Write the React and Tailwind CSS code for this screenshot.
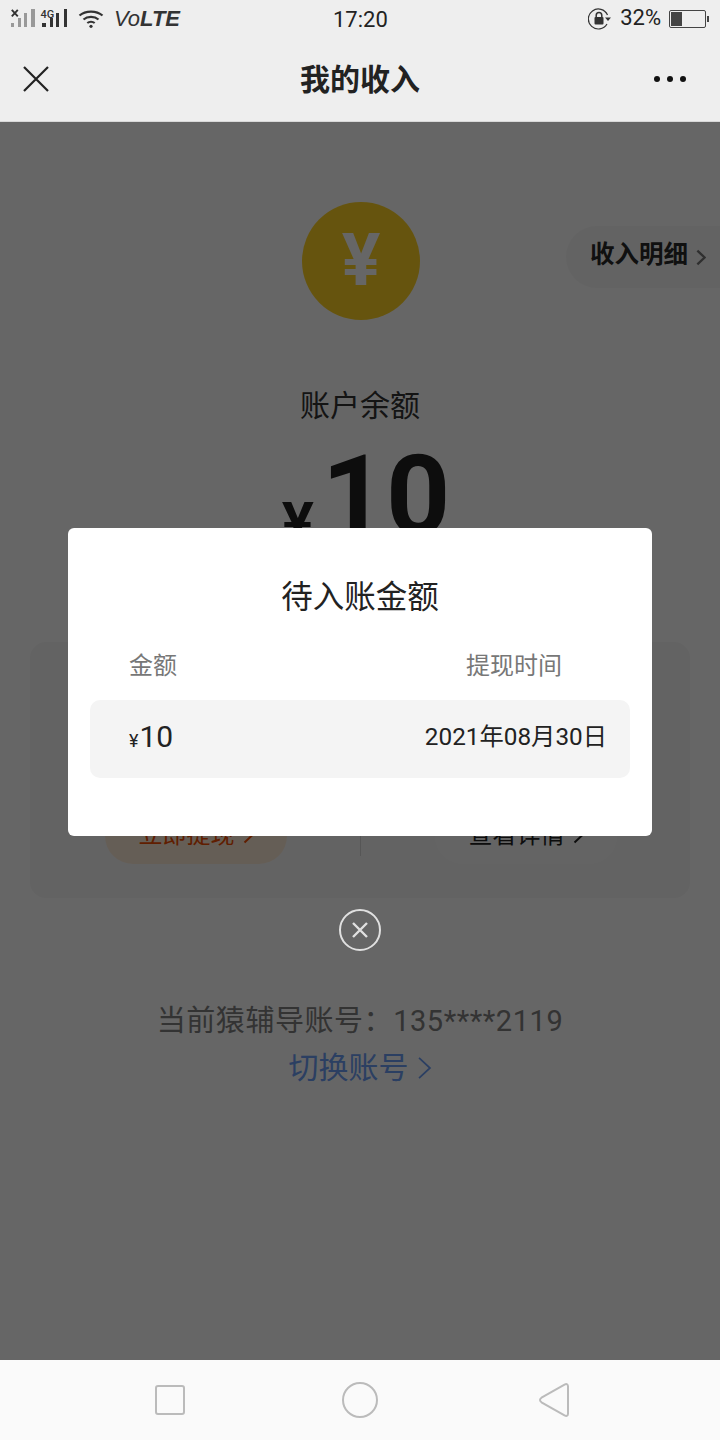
import React from 'react';

const FONT = "font-['Roboto','Noto_Sans_CJK_SC',sans-serif]";

function StatusBar() {
  return (
    <div className="relative flex h-[38px] items-center justify-between pl-[11px] pr-[11px] text-[#222]">
      <div className="flex items-center">
        <svg className="overflow-visible" width="58" height="20" viewBox="0 0 58 20">
          {/* sim 1, no service */}
          <path d="M0.8 0.8l6 6.5M6.8 0.8l-6 6.5" stroke="#333" strokeWidth="1.9" />
          <rect x="0" y="14" width="3" height="4" fill="#999" />
          <rect x="7" y="9" width="3" height="9" fill="#999" />
          <rect x="13" y="4" width="3" height="14" fill="#999" />
          <rect x="20" y="0" width="4" height="18" fill="#999" />
          {/* sim 2, 4G */}
          <rect x="31" y="14" width="4" height="4" fill="#333" />
          <rect x="39" y="9" width="3" height="9" fill="#333" />
          <rect x="45" y="4" width="3" height="14" fill="#333" />
          <rect x="53" y="0" width="3" height="18" fill="#333" />
          <text x="29.5" y="8.5" fontSize="11" fontWeight="500" fill="#333" fontFamily="Roboto, sans-serif">4G</text>
        </svg>
        <svg className="ml-[9px]" width="26" height="20" viewBox="0 0 26 20" fill="none" stroke="#333" strokeWidth="2.2">
          <path d="M1.5 6.5C7.5 1.2 18.5 1.2 24.5 6.5" />
          <path d="M5.5 10.5C9.5 7 16.5 7 20.5 10.5" />
          <path d="M9.3 14C11.4 12.3 14.6 12.3 16.7 14" />
          <circle cx="13" cy="17.3" r="1.6" fill="#333" stroke="none" />
        </svg>
        <span className="ml-[10px] text-[22px] leading-none font-['Liberation_Sans',sans-serif] italic text-[#333]">
          Vo<span className="font-bold">LTE</span>
        </span>
      </div>
      <span className="absolute left-[333px] top-[7px] text-[22px] leading-[26px]">17:20</span>
      <div className="flex items-center">
        <svg width="24" height="22" viewBox="0 0 24 22" fill="none">
          <path d="M19.5 7A10 10 0 1 0 19 16" stroke="#333" strokeWidth="1.2" />
          <path d="M17 9.5h6l-3 3.5z" fill="#333" />
          <rect x="6.5" y="9" width="9" height="7.5" rx="1" fill="#333" />
          <path d="M8.2 9V7.4a2.8 2.8 0 0 1 5.6 0V9" stroke="#333" strokeWidth="1.5" />
        </svg>
        <span className="mb-[2px] ml-[8px] text-[22px] leading-none">32%</span>
        <div className="ml-[8px] flex items-center">
          <div className="h-[18px] w-[37px] rounded-[2px] border border-[#444] p-[1px]">
            <div className="h-full w-[11px] bg-[#444]" />
          </div>
          <div className="ml-[1px] h-[6px] w-[2px] bg-[#444]" />
        </div>
      </div>
    </div>
  );
}

function Header() {
  return (
    <div className="flex h-[84px] items-center border-b border-[#d8d8d8] pb-[2px] pl-[23px] pr-[34px]">
      <div className="flex-1">
        <svg width="26" height="26" viewBox="0 0 26 26" stroke="#222" strokeWidth="2.2" fill="none">
          <path d="M1 1l24 24M25 1L1 25" />
        </svg>
      </div>
      <h1 className="ml-[11px] mt-[3px] text-[30px] leading-none font-bold text-[#222]">我的收入</h1>
      <div className="flex flex-1 justify-end gap-[7px]">
        <span className="h-[6px] w-[6px] rounded-full bg-[#111]" />
        <span className="h-[6px] w-[6px] rounded-full bg-[#111]" />
        <span className="h-[6px] w-[6px] rounded-full bg-[#111]" />
      </div>
    </div>
  );
}

function Chevron({ className, w = 11, h = 18, strokeWidth = 2 }) {
  return (
    <svg className={className} width={w} height={h} viewBox="0 0 11 18" fill="none" stroke="currentColor" strokeWidth={strokeWidth}>
      <path d="M1.5 1.5L9.5 9l-8 7.5" />
    </svg>
  );
}

function PageBehind() {
  return (
    <div className="relative flex h-full flex-col items-center bg-white">
      <div className="absolute right-0 top-[104px] flex h-[62px] w-[154px] items-center rounded-l-[31px] bg-[#f8f8f8] pb-[3px] pl-[24px]">
        <span className="text-[24.5px] leading-none font-bold text-[#2a2a2a]">收入明细</span>
        <Chevron className="ml-[8px] mt-[3px] text-[#777]" w={10} h={17} strokeWidth={2.6} />
      </div>
      <div className="ml-[2px] mt-[80px] flex h-[118px] w-[118px] items-center justify-center rounded-full bg-[#ffd324]">
        <span className="text-[72px] leading-none font-bold text-white">¥</span>
      </div>
      <p className="mt-[66px] text-[30px] leading-[40px] text-[#333]">账户余额</p>
      <div className="mt-[4px] flex h-[150px] items-start pl-[12px] text-[#222]">
        <span className="mr-[8px] mt-[64px] text-[60px] leading-none font-bold">¥</span>
        <span className="text-[112px] leading-[132px] font-bold">10</span>
      </div>
      <div className="mt-[62px] flex h-[256px] w-[660px] flex-col justify-end rounded-[16px] bg-[#f8f8f8] pb-[34px]">
        <div className="flex items-start">
          <div className="flex w-[330px] justify-end pr-[73px]">
            <div className="flex h-[56px] w-[182px] items-center justify-center rounded-[28px] bg-[#fdebd8] pb-[2px] text-[#f04b00]">
              <span className="text-[24px] leading-none">立即提现</span>
              <Chevron className="ml-[8px]" w={11} h={18} />
            </div>
          </div>
          <div className="h-[48px] w-px bg-[#d8d8d8]" />
          <div className="flex w-[329px] pl-[74px]">
            <div className="flex h-[56px] w-[182px] items-center justify-center rounded-[28px] bg-[#fafafa] pb-[2px] text-[#222]">
              <span className="text-[24px] leading-none">查看详情</span>
              <Chevron className="ml-[8px]" w={11} h={18} />
            </div>
          </div>
        </div>
      </div>
      <p className="mt-[102px] text-[29px] leading-[42px] tracking-[0.55px] text-[#808080]">当前猿辅导账号：135****2119</p>
      <div className="mt-[5px] flex items-center text-[#6c9df5]">
        <span className="text-[30px] leading-[42px]">切换账号</span>
        <Chevron className="ml-[8px]" w={15} h={28} strokeWidth={1.3} />
      </div>
    </div>
  );
}

function Modal() {
  return (
    <div className="absolute inset-0 flex flex-col items-center bg-black/60 pt-[406px]">
      <div className="h-[308px] w-[584px] rounded-[6px] bg-white px-[22px]">
        <h2 className="mt-[50px] text-center text-[31.5px] leading-[40px] text-[#222]">待入账金额</h2>
        <div className="mt-[32px] flex justify-between pl-[39px] pr-[68px] text-[24px] leading-[32px] text-[#777]">
          <span>金额</span>
          <span>提现时间</span>
        </div>
        <div className="mt-[18px] flex h-[78px] items-center justify-between rounded-[10px] bg-[#f4f4f4] pl-[39px] pr-[23px] text-[#222]">
          <span className="flex items-baseline pb-[2px]">
            <span className="text-[18px]">¥</span>
            <span className="ml-[1px] text-[30px] leading-none">10</span>
          </span>
          <span className="pb-[3px] text-[24.3px] leading-none">2021年08月30日</span>
        </div>
      </div>
      <button className="mt-[73px] flex h-[42px] w-[42px] items-center justify-center rounded-full border-[2.5px] border-[#e0e0e0]">
        <svg width="16" height="16" viewBox="0 0 16 16" stroke="#e0e0e0" strokeWidth="2.4" fill="none">
          <path d="M1 1l14 14M15 1L1 15" />
        </svg>
      </button>
    </div>
  );
}

function NavBar() {
  return (
    <div className="flex h-[80px] items-center bg-[#fafafa] pl-[155px]">
      <div className="h-[30px] w-[30px] rounded-[3px] border-2 border-[#bbb]" />
      <div className="ml-[157px] h-[36px] w-[36px] rounded-full border-2 border-[#bbb]" />
      <svg className="ml-[160px]" width="32" height="36" viewBox="0 0 32 36" fill="none" stroke="#bbb" strokeWidth="2">
        <path d="M3.5 15.7L26.5 2.6Q30 1 30 4.5V31.5Q30 35 26.5 33.4L3.5 20.3Q0.5 18 3.5 15.7Z" />
      </svg>
    </div>
  );
}

export default function App() {
  return (
    <div className={`flex h-[1440px] w-[720px] flex-col overflow-hidden bg-white ${FONT}`}>
      <div className="bg-[#eeeeee]">
        <StatusBar />
        <Header />
      </div>
      <div className="relative flex-1 overflow-hidden">
        <PageBehind />
        <Modal />
      </div>
      <NavBar />
    </div>
  );
}
